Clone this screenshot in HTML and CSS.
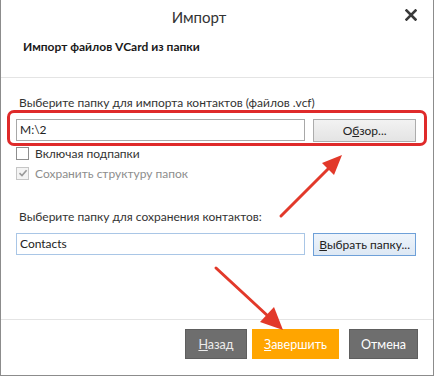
FILE: index.html
```html
<!DOCTYPE html>
<html lang="ru">
<head>
    <meta charset="UTF-8">
    <title>Импорт</title>
    <link rel="stylesheet" href="styles.css">
</head>
<body>
    <div class="window">
        <div class="header">
            <div class="title-row">
                <span class="title">Импорт</span>
                <svg class="close" width="12" height="12" viewBox="0 0 12 12">
                    <path d="M1.5 1.5 L10.5 10.5 M10.5 1.5 L1.5 10.5" stroke="#3a3a3a" stroke-width="2.6" stroke-linecap="square"/>
                </svg>
            </div>
            <div class="subtitle">Импорт файлов VCard из папки</div>
        </div>

        <div class="content">
            <div class="label">Выберите папку для импорта контактов (файлов .vcf)</div>
            <div class="row">
                <div class="field">M:\2</div>
                <button class="btn">О<u>б</u>зор...</button>
            </div>
            <div class="check-list">
                <div class="check">
                    <span class="box"></span>
                    <span>Включая подпапки</span>
                </div>
                <div class="check disabled">
                    <span class="box">
                        <svg width="10" height="10" viewBox="0 0 10 10">
                            <path d="M1.5 5.2 L4 7.6 L8.6 2.2" fill="none" stroke="#9a9a9a" stroke-width="1.6"/>
                        </svg>
                    </span>
                    <span>Сохранить структуру папок</span>
                </div>
            </div>

            <div class="label label-second">Выберите папку для сохранения контактов:</div>
            <div class="row">
                <div class="field field-blue">Contacts</div>
                <button class="btn btn-focus"><u>В</u>ыбрать папку...</button>
            </div>
        </div>

        <div class="footer">
            <button class="action"><u>Н</u>азад</button>
            <button class="action primary"><u>З</u>авершить</button>
            <button class="action cancel">Отмена</button>
        </div>

        <!-- annotations over the dialog -->
        <div class="highlight"></div>
        <svg class="arrows" width="434" height="376" viewBox="0 0 434 376">
            <g stroke="#e2392a" stroke-width="3" fill="#e2392a" stroke-linecap="round">
                <line x1="281" y1="216" x2="330" y2="167"/>
                <polygon points="342,155 322,163 334,175" stroke="none"/>
                <line x1="216" y1="268" x2="269" y2="317"/>
                <polygon points="283,330 260,322 274,307" stroke="none"/>
            </g>
        </svg>
    </div>
</body>
</html>
```

FILE: styles.css
```css
body {
    margin: 0;
    background: #fff;
    font-family: Lato, "Noto Sans", sans-serif;
    font-size: 12px;
    color: #333;
}
.window {
    position: relative;
    width: 434px;
    height: 376px;
    box-sizing: border-box;
    border-left: 1px solid #8c8c8c;
    border-right: 1px solid #8c8c8c;
    border-bottom: 1px solid #8c8c8c;
    display: flex;
    flex-direction: column;
    background: #fff;
}
.header {
    height: 77px;
    border-bottom: 1px solid #e4e4e4;
}
.title-row {
    height: 34px;
    display: flex;
    align-items: center;
    justify-content: center;
    padding-right: 36px;
    position: relative;
}
.title {
    font-size: 15px;
    color: #333;
}
.close {
    position: absolute;
    right: 16px;
    top: 9px;
}
.subtitle {
    margin: 5px 0 0 22px;
    font-weight: bold;
    font-size: 12px;
    line-height: 16px;
    color: #1a1a1a;
}
.content {
    flex: 1;
    padding: 17px 17px 0 15px;
}
.label {
    line-height: 16px;
    padding-left: 3px;
    color: #333;
    white-space: nowrap;
}
.label-second {
    margin-top: 26px;
}
.row {
    display: flex;
    align-items: center;
    gap: 8px;
    margin-top: 7px;
    height: 24px;
}
.field {
    width: 285px;
    height: 20px;
    line-height: 20px;
    border: 1px solid #a8a8a8;
    padding-left: 3px;
    box-sizing: content-box;
    color: #222;
}
.field-blue {
    border-color: #a9c6e6;
}
.btn {
    width: 103px;
    height: 23px;
    font-family: inherit;
    font-size: 12px;
    color: #222;
    border: 1px solid #acacac;
    background: linear-gradient(#f2f2f2, #e4e4e4);
    padding: 0;
    white-space: nowrap;
}
.btn-focus {
    border-color: #6ea0d8;
    background: linear-gradient(#eef4fb, #dde8f4);
}
.check-list {
    margin-top: 1px;
}
.check {
    display: flex;
    align-items: center;
    gap: 6px;
    height: 20px;
}
.check .box {
    width: 11px;
    height: 11px;
    border: 1px solid #8e8e8e;
    background: #fff;
    display: flex;
    align-items: center;
    justify-content: center;
}
.check.disabled {
    color: #8d8d8d;
}
.check.disabled .box {
    border-color: #c6c6c6;
    background: #f4f4f4;
}
.footer {
    height: 46px;
    border-top: 1px solid #e4e4e4;
    display: flex;
    justify-content: flex-end;
    align-items: flex-start;
    padding: 9px 15px 0 0;
}
.action {
    height: 30px;
    width: 62px;
    margin-left: 5px;
    font-family: inherit;
    font-size: 12.5px;
    color: #ececec;
    background: #6e6e6e;
    border: 1px solid #5e5e5e;
    padding: 0;
}
.action.primary {
    width: 87px;
    background: #ffa500;
    border-color: #ffa500;
    color: #fff;
}
.action.cancel {
    width: 69px;
    margin-left: 10px;
    color: #fff;
}
.highlight {
    position: absolute;
    left: 6px;
    top: 110px;
    width: 414px;
    height: 30px;
    border: 3px solid #df2a2a;
    border-radius: 7px;
}
.arrows {
    position: absolute;
    left: -1px;
    top: 0;
}
```
